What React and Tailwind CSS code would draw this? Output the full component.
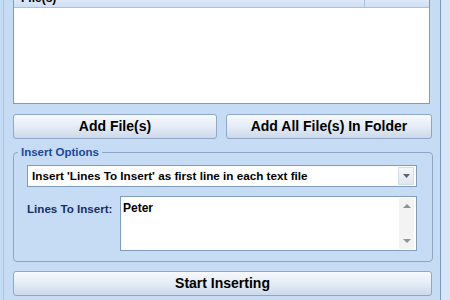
import React from "react";

const btn =
  "flex items-center justify-center h-[25px] rounded-[3px] border border-[#8fa6c6] bg-gradient-to-b from-[#f7f9fc] via-[#e4ecf6] to-[#cdd9ea] text-[14px] font-bold text-black";

const App = () => {
  return (
    <div className="w-[450px] h-[300px] flex overflow-hidden bg-[#c6dcf5] font-['Liberation_Sans',Arial,sans-serif]">
      <div className="w-[3px] bg-[#c6dcf5]" />
      <div className="w-px bg-[#a8c3e3]" />

      {/* main window */}
      <div className="w-[437px] flex flex-col pl-[9px] border-r border-[#7f99bb]">
        {/* file list */}
        <div className="mt-[-12px] h-[116px] w-[417px] border border-[#7f9db9] bg-white flex flex-col">
          <div className="h-[19px] flex border-b border-[#a9c1de] bg-gradient-to-b from-[#f1f6fc] to-[#cfe0f4] text-[12px] font-bold text-black">
            <div className="w-[351px] border-r border-[#a9c1de] pl-[7px] flex items-center">File(s)</div>
            <div className="flex-1" />
          </div>
          <div className="flex-1" />
        </div>

        {/* add buttons */}
        <div className="mt-[10px] flex gap-[9px]">
          <button className={`${btn} w-[204px]`}>Add File(s)</button>
          <button className={`${btn} w-[206px]`}>Add All File(s) In Folder</button>
        </div>

        {/* insert options group */}
        <fieldset className="mt-[6px] w-[420px] border border-[#8ba6c8] rounded-[4px] p-0">
          <legend className="ml-[4px] px-[3px] text-[11.5px] leading-[14px] font-bold text-[#1d4898]">
            Insert Options
          </legend>
          <div className="px-[13px] pt-[6px] pb-[10px] flex flex-col">
            <div className="w-[390px] h-[22px] border border-[#7f9db9] bg-white flex items-center">
              <span className="flex-1 pl-[4px] text-[11.7px] font-bold text-black whitespace-nowrap">
                Insert 'Lines To Insert' as first line in each text file
              </span>
              <div className="w-[16px] h-[18px] mr-[2px] border border-[#d5dde8] bg-gradient-to-b from-[#f4f7fb] to-[#dfe7f1] flex items-center justify-center">
                <svg width="7" height="4" viewBox="0 0 7 4">
                  <path d="M0 0h7L3.5 4z" fill="#5c6470" />
                </svg>
              </div>
            </div>

            <div className="mt-[9px] flex">
              <span className="w-[93px] pt-[4px] text-[11.6px] font-bold text-[#172f5f]">Lines To Insert:</span>
              <div className="w-[297px] h-[55px] border border-[#7f9db9] bg-white flex">
                <div className="flex-1 pl-[2px] pt-[2px] text-[12px] font-bold text-black">Peter</div>
                <div className="w-[15px] mr-[2px] my-px bg-[#f3f3f3] flex flex-col items-center justify-between py-[6px]">
                  <svg width="8" height="4" viewBox="0 0 8 4">
                    <path d="M0 4h8L4 0z" fill="#8e949c" />
                  </svg>
                  <svg width="8" height="4" viewBox="0 0 8 4">
                    <path d="M0 0h8L4 4z" fill="#8e949c" />
                  </svg>
                </div>
              </div>
            </div>
          </div>
        </fieldset>

        {/* start */}
        <button className={`${btn} mt-[9px] w-[419px]`}>Start Inserting</button>
      </div>

      <div className="flex-1 bg-[#d6e5f7]" />
    </div>
  );
};

export default App;
